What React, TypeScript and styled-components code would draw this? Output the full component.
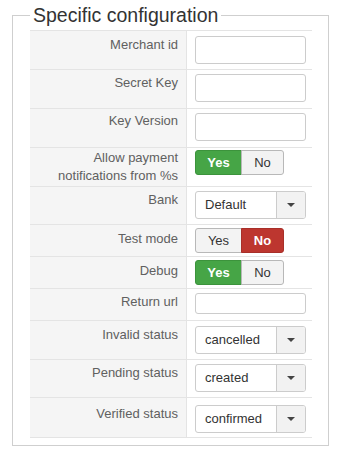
import styled, { createGlobalStyle } from "styled-components"

type Control =
  | { kind: "input"; small?: boolean }
  | { kind: "toggle"; value: "yes" | "no" }
  | { kind: "select"; value: string }

type Row = { label: string; h: number; pt: number; lpt: number; control: Control }

const rows: Row[] = [
  { label: "Merchant id", h: 39, pt: 5, lpt: 5, control: { kind: "input" } },
  { label: "Secret Key", h: 39, pt: 4, lpt: 4, control: { kind: "input" } },
  { label: "Key Version", h: 39, pt: 4, lpt: 3, control: { kind: "input" } },
  { label: "Allow payment notifications from %s", h: 39, pt: 2, lpt: 1, control: { kind: "toggle", value: "yes" } },
  { label: "Bank", h: 38, pt: 4, lpt: 4, control: { kind: "select", value: "Default" } },
  { label: "Test mode", h: 32, pt: 3, lpt: 5, control: { kind: "toggle", value: "no" } },
  { label: "Debug", h: 32, pt: 3, lpt: 5, control: { kind: "toggle", value: "yes" } },
  { label: "Return url", h: 32, pt: 4, lpt: 4, control: { kind: "input", small: true } },
  { label: "Invalid status", h: 39, pt: 5, lpt: 5, control: { kind: "select", value: "cancelled" } },
  { label: "Pending status", h: 38, pt: 4, lpt: 4, control: { kind: "select", value: "created" } },
  { label: "Verified status", h: 40, pt: 7, lpt: 7, control: { kind: "select", value: "confirmed" } },
]

const renderControl = (c: Control) => {
  if (c.kind === "input") return <TextInput $small={c.small} />
  if (c.kind === "toggle")
    return (
      <Toggle>
        <ToggleBtn $active={c.value === "yes"} $tone="yes">Yes</ToggleBtn>
        <ToggleBtn $active={c.value === "no"} $tone="no">No</ToggleBtn>
      </Toggle>
    )
  return (
    <Select>
      <SelectValue>{c.value}</SelectValue>
      <SelectArrow>
        <Caret />
      </SelectArrow>
    </Select>
  )
}

export default function App() {
  return (
    <>
      <GlobalStyle />
      <Fieldset>
        <Legend>Specific configuration</Legend>
        <Table>
          {rows.map((r) => (
            <TableRow key={r.label} $h={r.h}>
              <LabelCell $pt={r.lpt}>{r.label}</LabelCell>
              <ControlCell $pt={r.pt}>{renderControl(r.control)}</ControlCell>
            </TableRow>
          ))}
        </Table>
      </Fieldset>
    </>
  )
}

const LineColor = "#e4e4e4"
const TextColor = "#333"

const GlobalStyle = createGlobalStyle`
  html, body {
    margin: 0;
    padding: 0;
    background: #fff;
    font-family: "Liberation Sans", Arial, sans-serif;
    color: ${TextColor};
  }
`

const Fieldset = styled.fieldset`
  box-sizing: border-box;
  width: 317px;
  margin: 4px 0 0 12px;
  padding: 4px 16px 7px 17px;
  border: 1px solid #cfcfcf;
  min-width: 0;
`

const Legend = styled.legend`
  font-size: 19.5px;
  line-height: 22px;
  padding: 0 3px;
  margin-left: 0;
  color: ${TextColor};
`

const Table = styled.div`
  width: 282px;
  border-top: 1px solid ${LineColor};
`

const TableRow = styled.div<{ $h: number }>`
  box-sizing: border-box;
  display: grid;
  grid-template-columns: 157px 125px;
  height: ${(p) => p.$h}px;
  border-bottom: 1px solid ${LineColor};
`

const LabelCell = styled.div<{ $pt: number }>`
  background: #f5f5f5;
  border-right: 1px solid ${LineColor};
  padding: ${(p) => p.$pt}px 8px 0 20px;
  text-align: right;
  font-size: 13px;
  line-height: 18px;
  color: #606060;
`

const ControlCell = styled.div<{ $pt: number }>`
  padding: ${(p) => p.$pt}px 0 0 8px;
  display: flex;
  align-items: flex-start;
`

const TextInput = styled.div<{ $small?: boolean }>`
  box-sizing: border-box;
  width: 111px;
  height: ${(p) => (p.$small ? 21 : 28)}px;
  border: 1px solid #ccc;
  border-radius: 3px;
  background: #fff;
`

const Toggle = styled.div`
  display: flex;
  height: 25px;
`

const ToggleBtn = styled.div<{ $active: boolean; $tone: "yes" | "no" }>`
  box-sizing: border-box;
  width: ${(p) => (p.$tone === "yes" ? 47 : 43)}px;
  height: 25px;
  display: flex;
  align-items: center;
  justify-content: center;
  font-size: 13px;
  font-weight: ${(p) => (p.$active ? "bold" : "normal")};
  color: ${(p) => (p.$active ? "#fff" : TextColor)};
  background: ${(p) => (p.$active ? (p.$tone === "yes" ? "#46a546" : "#bd362f") : "#f3f3f3")};
  border: 1px solid ${(p) => (p.$active ? (p.$tone === "yes" ? "#3c933c" : "#a82f29") : "#b8b8b8")};
  border-radius: ${(p) => (p.$tone === "yes" ? "3px 0 0 3px" : "0 3px 3px 0")};
  ${(p) => (p.$tone === "no" ? "margin-left: -1px;" : "")}
`

const Select = styled.div`
  box-sizing: border-box;
  display: flex;
  width: 111px;
  height: 28px;
  border: 1px solid #ccc;
  border-radius: 3px;
  background: #fff;
  overflow: hidden;
`

const SelectValue = styled.div`
  flex: 1;
  padding: 0 0 0 9px;
  font-size: 13px;
  line-height: 26px;
  color: ${TextColor};
`

const SelectArrow = styled.div`
  width: 28px;
  border-left: 1px solid #ccc;
  background: #f2f2f2;
  display: flex;
  align-items: center;
  justify-content: center;
`

const Caret = styled.span`
  width: 0;
  height: 0;
  border-left: 4px solid transparent;
  border-right: 4px solid transparent;
  border-top: 4px solid #444;
`
